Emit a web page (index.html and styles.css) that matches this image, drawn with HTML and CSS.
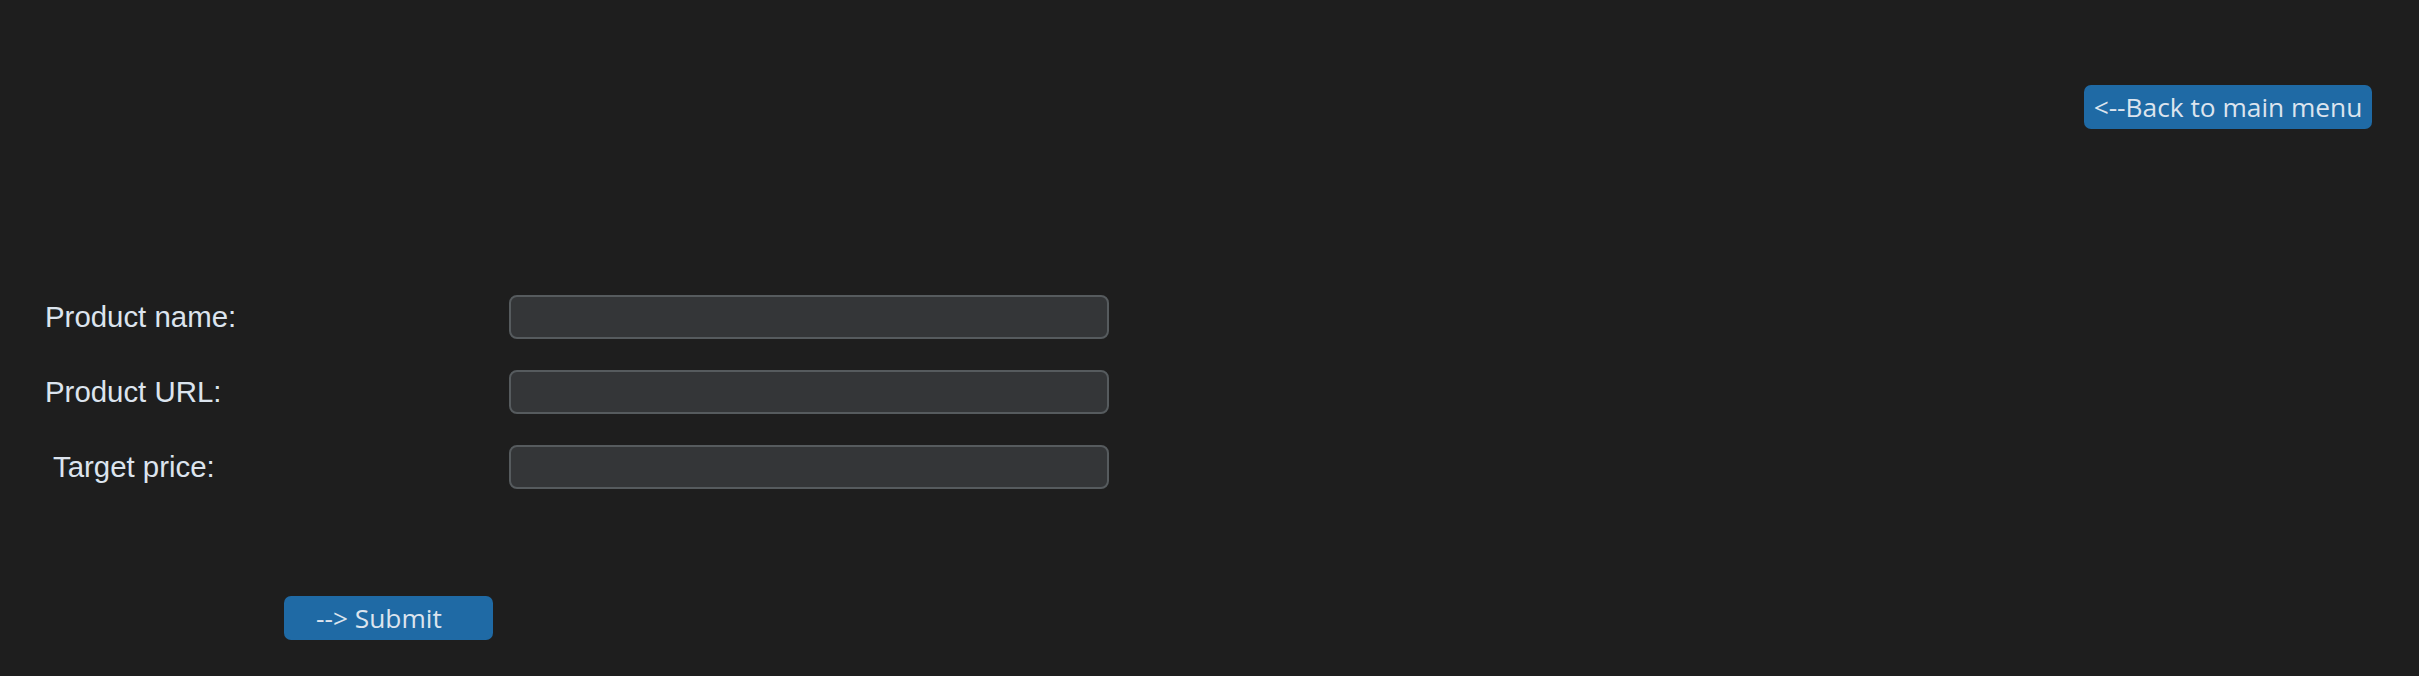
FILE: index.html
```html
<!DOCTYPE html>
<html>
<head>
<meta charset="utf-8">
<link rel="stylesheet" href="styles.css">
</head>
<body>
<div class="page">
  <div class="top-bar">
    <button class="btn btn-back">&lt;--Back to main menu</button>
  </div>
  <div class="form">
    <label class="label">Product name:</label>
    <input class="field" type="text">
    <label class="label">Product URL:</label>
    <input class="field" type="text">
    <label class="label label-indent">Target price:</label>
    <input class="field" type="text">
  </div>
  <div class="submit-row">
    <button class="btn btn-submit">--&gt; Submit</button>
  </div>
</div>
</body>
</html>
```

FILE: styles.css
```css
html, body {
  margin: 0;
  padding: 0;
  background: #1e1e1e;
  width: 100%;
  height: 100%;
}

.page {
  display: flex;
  flex-direction: column;
  padding-top: 85px;
}

.top-bar {
  display: flex;
  justify-content: flex-end;
  padding-right: 47px;
}

.btn {
  background: #1f6aa5;
  color: #dce4ee;
  border: none;
  border-radius: 7px;
  font-family: "Open Sans", "DejaVu Sans", sans-serif;
  font-size: 26.3px;
  height: 44px;
  padding: 0;
  display: flex;
  align-items: center;
  justify-content: center;
  cursor: pointer;
}

.btn-back {
  width: 288px;
}

.form {
  display: grid;
  grid-template-columns: 509px 600px;
  grid-auto-rows: 44px;
  row-gap: 31px;
  margin-top: 166px;
}

.label {
  display: flex;
  align-items: center;
  padding-left: 45px;
  font-family: "Liberation Sans", Arial, sans-serif;
  font-size: 29.4px;
  color: #dce4ee;
}

.label-indent {
  padding-left: 53px;
}

.field {
  box-sizing: border-box;
  height: 44px;
  width: 600px;
  margin: 0;
  background: #343638;
  border: 2px solid #565b5e;
  border-radius: 8px;
  outline: none;
}

.submit-row {
  display: flex;
  padding-left: 284px;
  margin-top: 107px;
}

.btn-submit {
  width: 209px;
  justify-content: flex-start;
  padding-left: 32px;
}
```
